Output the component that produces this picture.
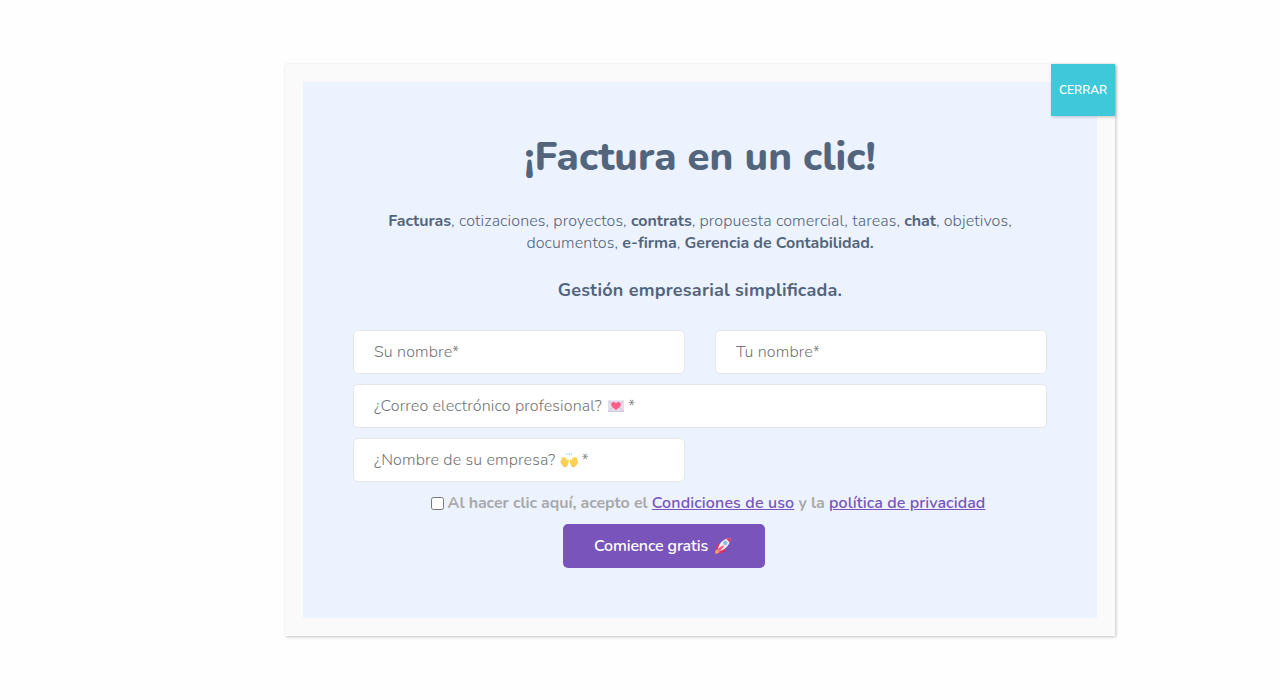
<main>
  <section class="popup">
    <button class="close">CERRAR</button>
    <div class="panel">
      <h1>¡Factura en un clic!</h1>
      <p><strong>Facturas</strong>, cotizaciones, proyectos, <strong>contrats</strong>, propuesta comercial, tareas, <strong>chat</strong>, objetivos,<br />documentos, <strong>e-firma</strong>, <strong>Gerencia de Contabilidad.</strong></p>
      <h2>Gestión empresarial simpli<span class="lig">fi</span>cada.</h2>
      <form>
        <div class="field">Su nombre*</div>
        <div class="field">Tu nombre*</div>
        <div class="field wide">
          <span>¿Correo electrónico profesional?</span>
          <svg width="20" height="16" viewBox="0 0 20 16">
            <rect x="1" y="2.300" width="16" height="11.400" rx=".7" fill="#e4deeb" />
            <path d="M1.500 2.800l7.500 6.800 7.500-6.800M1.500 13.200l5.600-5M16.500 13.200l-5.600-5M1 13.500h16" fill="none" stroke="#c9c0d8" stroke-width=".8" />
            <path d="M9 12C6 10 4.200 8.400 4.200 6.300c0-2.500 3.600-3.300 4.800-.9 1.200-2.400 4.800-1.600 4.800.9 0 2.100-1.800 3.700-4.800 5.700z" fill="#ff5c86" />
          </svg>
          <span>*</span>
        </div>
        <div class="field">
          <span>¿Nombre de su empresa?</span>
          <svg width="20" height="16" viewBox="0 0 20 16">
            <path d="M4 14.700C2.100 13.600.5 11.800.5 9.300c0-1.100.9-1.400 1.300-.5L1.500 6.500c-.1-1.100 1.100-1.300 1.400-.2l.1-1c.2-1 1.400-.8 1.500.1l.3.700c.3-.8 1.300-.6 1.400.2l.6 2.500.7-.9c.7-.7 1.600-.1 1.400.8l-.6 2.700c-.3 1.400-.9 2.600-1.900 3.400z" fill="#ffcf58" />
            <path d="M14.600 14.700c1.900-1.100 3.500-2.900 3.500-5.400 0-1.100-.9-1.400-1.300-.5l.3-2.300c.1-1.100-1.100-1.300-1.400-.2l-.1-1c-.2-1-1.400-.8-1.500.1l-.3.700c-.3-.8-1.300-.6-1.400.2l-.6 2.500-.7-.9c-.7-.7-1.600-.1-1.400.8l.6 2.700c.3 1.400.9 2.600 1.900 3.400z" fill="#ffcf58" />
            <path d="M3.800 14.600h2.700M12 14.600h2.700" stroke="#f2ad45" stroke-width=".7" />
            <path d="M9.300 1v1.800M6.500 1.500l.8 1.300M12.100 1.500l-.8 1.300" stroke="#72c2ef" stroke-width=".9" />
          </svg>
          <span>*</span>
        </div>
      </form>
      <div class="consent">
        <i class="box"></i>
        <span>Al hacer clic aquí, acepto el <a class="terms" href="#uso">Condiciones de uso</a> y la <a href="#privacidad">política de privacidad</a></span>
      </div>
      <button class="submit">
        <span>Comience gratis</span>
        <svg width="18" height="18" viewBox="0 0 18 18">
          <path d="M7 6L3.200 7.300 1.700 12l4-1.400zM11.700 11l-1.300 4-4.700 1.500 1.500-4z" fill="#dd2e5a" />
          <path d="M4 11.400C5 6.500 9.500 1.600 16.700.8c-.7 7.200-5.500 12-10.400 13z" fill="#f4f1f6" />
          <path d="M12.300 2Q14.300 1 16.700.8q-.1 2.500-1.100 4.600z" fill="#e2335f" />
          <path d="M4 11.400L9 8.300c1 .5 1 .8.600 1.600l-3.300 3.900z" fill="#ff5c86" />
          <circle cx="11.300" cy="6" r="1.900" fill="#75c5e8" stroke="#9aaabc" stroke-width=".5" />
          <path d="M3.800 12.200l1.900 1.600c.3 1.700-1 2.700-4.700 3 .1-3.300 1-4.700 2.800-4.600z" fill="#ff9566" />
        </svg>
      </button>
    </div>
  </section>
</main>

<style>
  :global(body) { background: #fefefe; }
  main {
    box-sizing: border-box;
    height: 700px;
    padding: 64px 0 0 285px;
    overflow: hidden;
    font: 300 16px/22px Nunito, Lato, sans-serif;
    color: #53657d;
  }
  .popup {
    position: relative;
    box-sizing: border-box;
    width: 830px;
    height: 572px;
    padding: 18px;
    background: #fafafa;
    box-shadow: 1px 1px 3px rgba(2, 2, 2, .23);
  }
  .close {
    position: absolute;
    top: 0;
    right: 0;
    width: 64px;
    height: 52px;
    padding: 0;
    border: 0;
    background: #3ec8d9;
    color: #fff;
    font: 600 12px/52px Nunito, Lato, sans-serif;
    box-shadow: 1px 1px 3px rgba(2, 2, 2, .23);
  }
  .panel {
    box-sizing: border-box;
    height: 536px;
    padding: 50px 50px 0;
    display: flex;
    flex-direction: column;
    align-items: center;
    background: #ecf3ff;
  }
  h1 { margin: 0; font-size: 40px; line-height: 50px; font-weight: 800; white-space: nowrap; }
  p { margin: 28px 0 0; text-align: center; white-space: nowrap; letter-spacing: .13px; }
  strong { font-weight: 700; letter-spacing: -.03px; }
  strong:last-child { letter-spacing: -.06px; }
  h2 { margin: 25px 0 0; font-size: 18px; line-height: 22px; font-weight: 700; letter-spacing: .22px; }
  .lig { letter-spacing: 0; }
  form {
    align-self: stretch;
    display: grid;
    grid-template-columns: 1fr 1fr;
    gap: 10px 30px;
    margin-top: 29px;
  }
  .field {
    box-sizing: border-box;
    height: 44px;
    padding: 0 20px;
    display: flex;
    align-items: center;
    border: 1px solid #e6e6e8;
    border-radius: 5px;
    background: #fff;
    color: #757575;
    font-weight: 300;
    letter-spacing: .15px;
  }
  .wide { grid-column: span 2; }
  .field svg { margin: 0 1px 0 5px; }
  .consent {
    display: flex;
    align-items: center;
    height: 22px;
    margin: 10px 0 0 16px;
    color: #a9a9a9;
    font-weight: 700;
    letter-spacing: -.09px;
    white-space: nowrap;
  }
  .box {
    box-sizing: border-box;
    width: 13px;
    height: 13px;
    margin-right: 4px;
    border: 1px solid #767676;
    border-radius: 2.5px;
    background: #fff;
  }
  a { color: #7854bb; font-weight: 600; letter-spacing: .08px; text-decoration: underline; }
  .terms { letter-spacing: .13px; }
  .submit {
    width: 202px;
    height: 44px;
    margin: 10px 72px 0 0;
    padding: 0 0 0 31px;
    display: flex;
    align-items: center;
    gap: 6px;
    border: 0;
    border-radius: 5px;
    background: #7854bb;
    color: #fff;
    font: 600 16px/22px Nunito, Lato, sans-serif;
    letter-spacing: -.16px;
  }
</style>
